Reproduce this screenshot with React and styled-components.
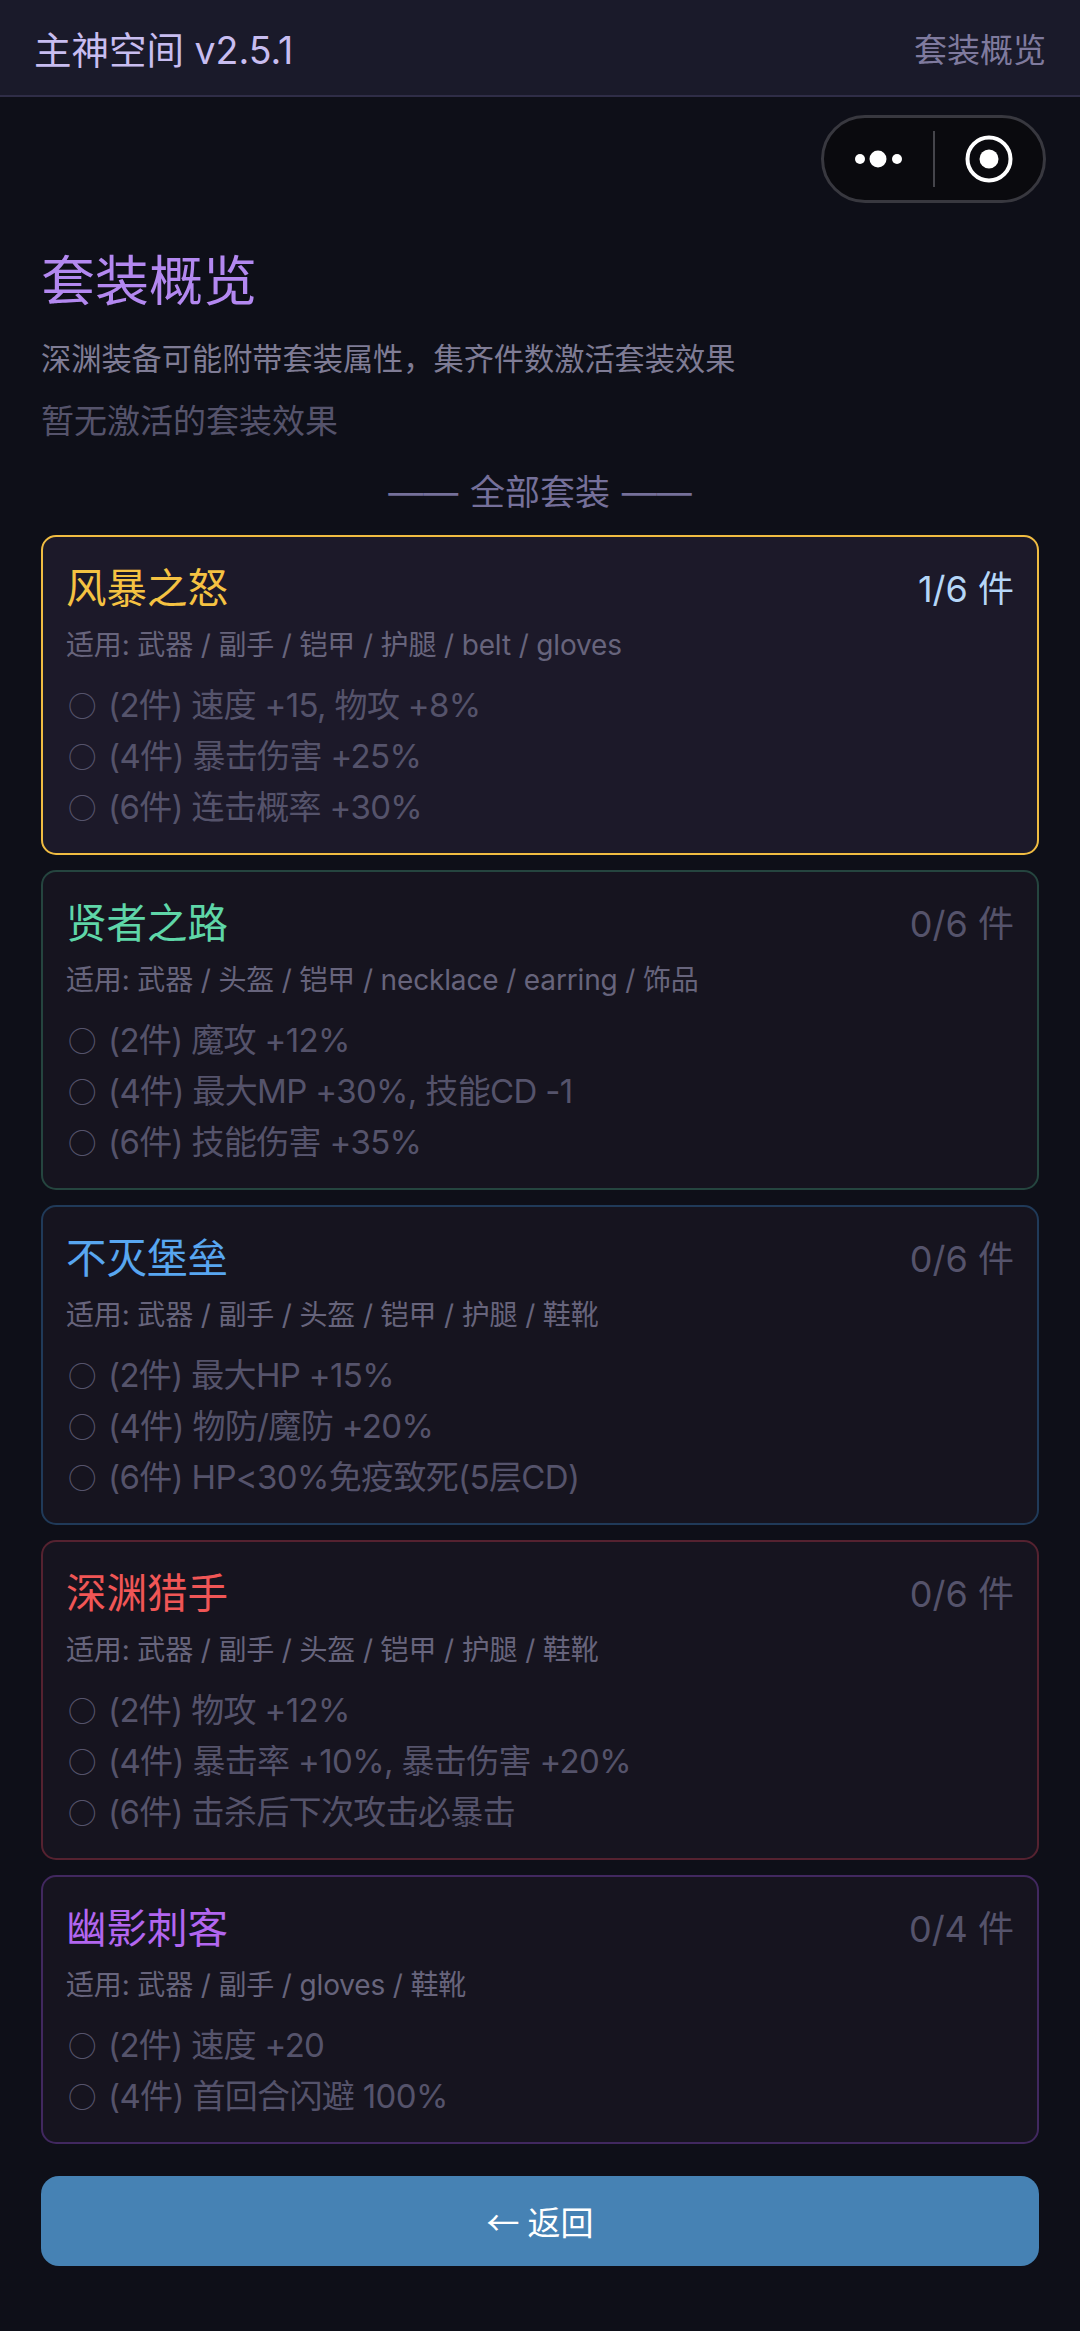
import React from "react";
import styled, { createGlobalStyle } from "styled-components";

const FONT = `Inter, "Noto Sans CJK SC", sans-serif`;

const GlobalStyle = createGlobalStyle`
  html, body {
    margin: 0;
    padding: 0;
    background: #0e0f18;
  }
  * {
    box-sizing: border-box;
  }
`;

const Page = styled.div`
  width: 1080px;
  min-height: 2331px;
  background: #0e0f18;
  font-family: ${FONT};
  overflow: hidden;
`;

const Header = styled.header`
  height: 97px;
  padding: 0 34px;
  display: flex;
  align-items: center;
  justify-content: space-between;
  background: #1a1a2a;
  border-bottom: 2px solid #2f2d47;
`;

const AppName = styled.div`
  font-size: 37.5px;
  color: #c8bdf0;
`;

const HeaderPage = styled.div`
  font-size: 33px;
  color: #7f7a9e;
`;

const CapsuleRow = styled.div`
  display: flex;
  justify-content: flex-end;
  padding: 18px 34px 0;
`;

const Capsule = styled.div`
  width: 225px;
  height: 88px;
  border-radius: 44px;
  border: 3px solid #38383f;
  background: #0a0a0e;
  display: flex;
  align-items: center;
`;

const CapsuleSide = styled.div`
  flex: 1;
  display: flex;
  justify-content: center;
  align-items: center;
`;

const CapsuleDivider = styled.div`
  width: 2px;
  height: 56px;
  background: #45454b;
`;

const Main = styled.main`
  padding: 0 41px;
`;

const Title = styled.h1`
  margin: 43px 0 0;
  font-size: 54px;
  line-height: 72px;
  font-weight: 400;
  color: #b388f0;
`;

const Subtitle = styled.p`
  margin: 21px 0 0;
  font-size: 30.2px;
  line-height: 40px;
  color: #7f7c95;
`;

const EmptyNote = styled.p`
  margin: 20px 0 0;
  font-size: 33px;
  line-height: 44px;
  color: #55536b;
`;

const SectionTitle = styled.div`
  margin-top: 27px;
  font-size: 35px;
  line-height: 44px;
  word-spacing: 2px;
  text-align: center;
  color: #75709a;
`;

const CardList = styled.div`
  margin-top: 20.5px;
  display: flex;
  flex-direction: column;
  gap: 14.5px;
`;

const Card = styled.section`
  padding: 21px 23px 20px;
  border-radius: 15px;
  border: 2px solid ${(p) => p.$border};
  background: ${(p) => (p.$active ? "#1c1929" : "#16141f")};
`;

const CardHead = styled.div`
  display: flex;
  align-items: center;
  justify-content: space-between;
  height: 56px;
`;

const CardName = styled.div`
  font-size: 40.5px;
  color: ${(p) => p.$color};
`;

const CardCount = styled.div`
  font-size: 36px;
  color: ${(p) => (p.$active ? "#b5d6f7" : "#55536b")};
`;

const Slots = styled.div`
  margin-top: 11.5px;
  font-size: 28px;
  line-height: 40px;
  letter-spacing: -0.15px;
  color: #67647c;
`;

const Bonuses = styled.div`
  margin-top: 14.5px;
`;

const Bonus = styled.div`
  font-size: 33px;
  line-height: 51.2px;
  letter-spacing: -0.65px;
  color: #55536b;
`;

const BonusMark = styled.span`
  display: inline-block;
  width: 40px;
  margin-left: 2px;
  font-family: "Noto Sans CJK SC", sans-serif;
  font-size: 28.5px;
  line-height: 1;
`;

const BackButton = styled.button`
  display: block;
  width: 100%;
  height: 90px;
  margin-top: 32px;
  border: 0;
  border-radius: 18px;
  background: #4682b4;
  color: #fff;
  font-family: Roboto, "Noto Sans CJK SC", sans-serif;
  font-size: 33px;
`;

const SETS = [
  {
    name: "风暴之怒",
    color: "#f5c242",
    border: "#f0bc42",
    count: "1/6 件",
    active: true,
    slots: "适用: 武器 / 副手 / 铠甲 / 护腿 / belt / gloves",
    bonuses: ["(2件) 速度 +15, 物攻 +8%", "(4件) 暴击伤害 +25%", "(6件) 连击概率 +30%"],
  },
  {
    name: "贤者之路",
    color: "#5fd6a8",
    border: "#25453f",
    count: "0/6 件",
    slots: "适用: 武器 / 头盔 / 铠甲 / necklace / earring / 饰品",
    bonuses: ["(2件) 魔攻 +12%", "(4件) 最大MP +30%, 技能CD -1", "(6件) 技能伤害 +35%"],
  },
  {
    name: "不灭堡垒",
    color: "#58a6f0",
    border: "#203a59",
    count: "0/6 件",
    slots: "适用: 武器 / 副手 / 头盔 / 铠甲 / 护腿 / 鞋靴",
    bonuses: ["(2件) 最大HP +15%", "(4件) 物防/魔防 +20%", "(6件) HP<30%免疫致死(5层CD)"],
  },
  {
    name: "深渊猎手",
    color: "#f05656",
    border: "#552230",
    count: "0/6 件",
    slots: "适用: 武器 / 副手 / 头盔 / 铠甲 / 护腿 / 鞋靴",
    bonuses: ["(2件) 物攻 +12%", "(4件) 暴击率 +10%, 暴击伤害 +20%", "(6件) 击杀后下次攻击必暴击"],
  },
  {
    name: "幽影刺客",
    color: "#b266f0",
    border: "#41285f",
    count: "0/4 件",
    slots: "适用: 武器 / 副手 / gloves / 鞋靴",
    bonuses: ["(2件) 速度 +20", "(4件) 首回合闪避 100%"],
  },
];

const App = () => {
  return (
    <Page>
      <GlobalStyle />
      <Header>
        <AppName>主神空间 v2.5.1</AppName>
        <HeaderPage>套装概览</HeaderPage>
      </Header>
      <CapsuleRow>
        <Capsule>
          <CapsuleSide>
            <svg width="48" height="20" viewBox="0 0 48 20">
              <circle cx="6" cy="10" r="5" fill="#fff" />
              <circle cx="24" cy="10" r="8.5" fill="#fff" />
              <circle cx="43" cy="10" r="5" fill="#fff" />
            </svg>
          </CapsuleSide>
          <CapsuleDivider />
          <CapsuleSide>
            <svg width="48" height="48" viewBox="0 0 48 48">
              <circle cx="24" cy="24" r="21.5" fill="none" stroke="#fff" strokeWidth="4" />
              <circle cx="24" cy="24" r="9.5" fill="#fff" />
            </svg>
          </CapsuleSide>
        </Capsule>
      </CapsuleRow>
      <Main>
        <Title>套装概览</Title>
        <Subtitle>深渊装备可能附带套装属性，集齐件数激活套装效果</Subtitle>
        <EmptyNote>暂无激活的套装效果</EmptyNote>
        <SectionTitle>—— 全部套装 ——</SectionTitle>
        <CardList>
          {SETS.map((set) => (
            <Card key={set.name} $border={set.border} $active={set.active}>
              <CardHead>
                <CardName $color={set.color}>{set.name}</CardName>
                <CardCount $active={set.active}>{set.count}</CardCount>
              </CardHead>
              <Slots>{set.slots}</Slots>
              <Bonuses>
                {set.bonuses.map((text) => (
                  <Bonus key={text}>
                    <BonusMark>○</BonusMark>
                    {text}
                  </Bonus>
                ))}
              </Bonuses>
            </Card>
          ))}
        </CardList>
        <BackButton>← 返回</BackButton>
      </Main>
    </Page>
  );
};

export default App;
